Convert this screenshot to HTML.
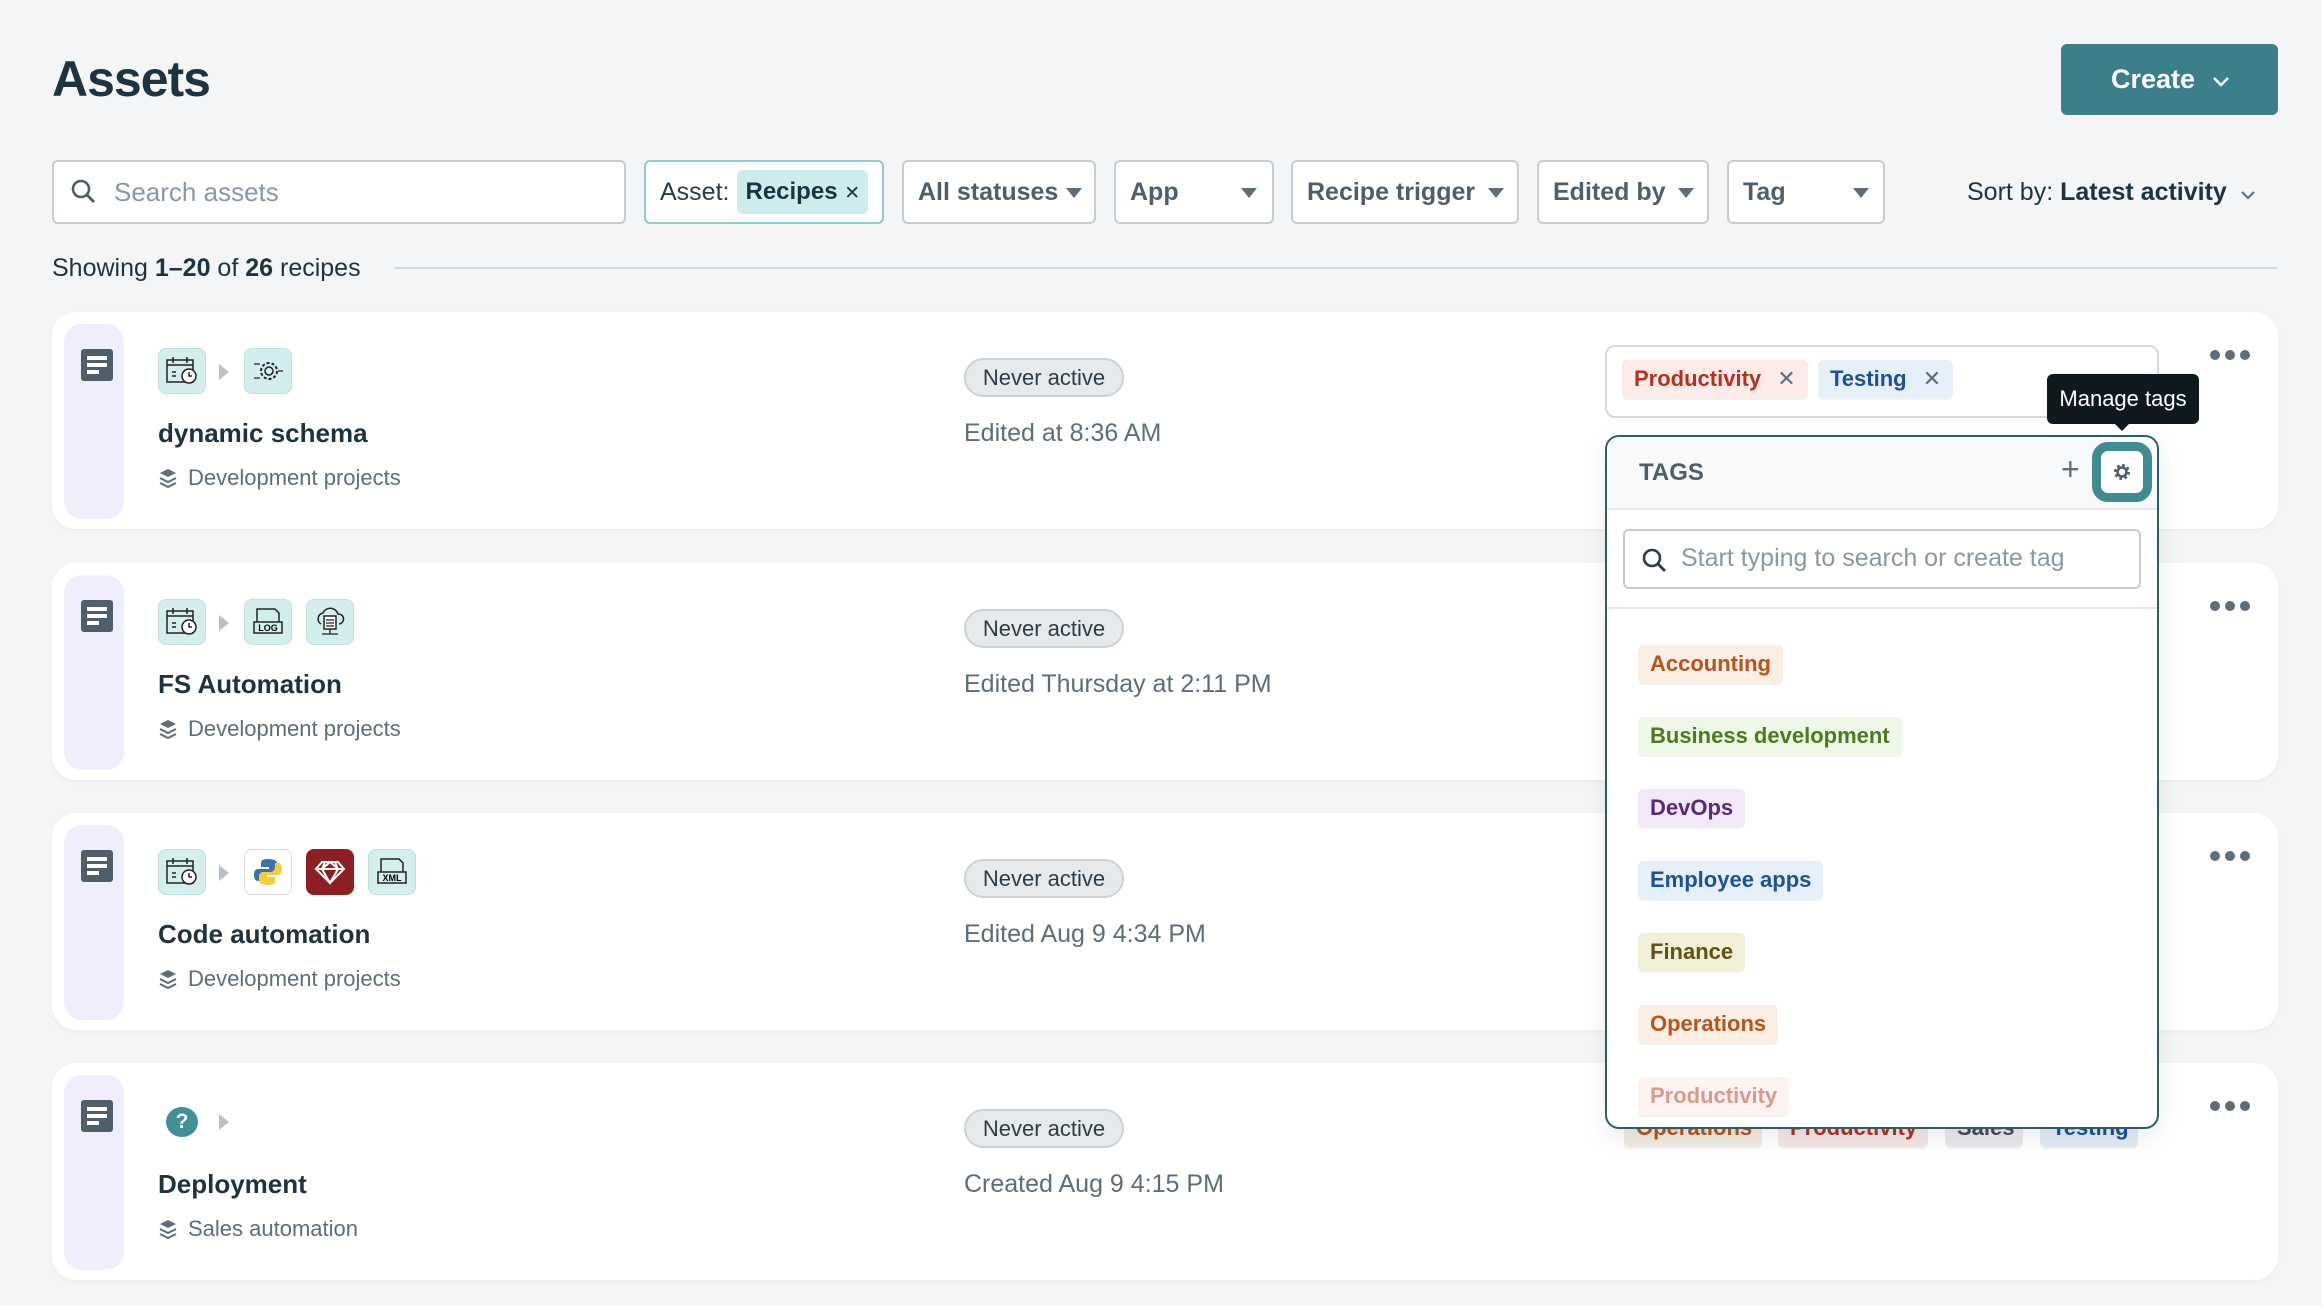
<!DOCTYPE html>
<html><head><meta charset="utf-8"><style>
*{box-sizing:border-box;margin:0;padding:0}
body{width:2322px;height:1306px;background:#f3f5f7;font-family:"Liberation Sans",sans-serif;color:#1e3340;position:relative;overflow:hidden}
.a{position:absolute}
.flt{position:absolute;top:160px;height:64px;background:#fff;border:2px solid #c6cdd3;border-radius:6px;font-size:26px;color:#5d6e7a;display:flex;align-items:center;padding-left:14px;white-space:nowrap}
.car{position:absolute;width:0;height:0;border-left:8px solid transparent;border-right:8px solid transparent;border-top:10px solid #5d6e7a}
.card{position:absolute;left:52px;width:2226px;height:217px;background:#fff;border-radius:24px;box-shadow:0 2px 4px rgba(0,0,0,.04)}
.strip{position:absolute;left:12px;top:12px;width:60px;bottom:10px;background:#efeefc;border-radius:18px}
.doc{position:absolute;left:29px;top:37px;width:32px;height:32px;background:#4e5f6b;border-radius:3px}
.doc i{position:absolute;left:6px;height:4px;background:#fff}
.ico{position:absolute;width:48px;height:46px;background:#d3eeec;border:1.5px solid #bfe0de;border-radius:8px;display:flex;align-items:center;justify-content:center}
.arr{position:absolute;width:0;height:0;border-top:8px solid transparent;border-bottom:8px solid transparent;border-left:10px solid #b8c1c8}
.ttl{position:absolute;left:106px;font-size:26px;font-weight:bold;color:#1e3340}
.fol{position:absolute;left:106px;font-size:22px;color:#5d6e7a;display:flex;align-items:center;gap:10px}
.pill{position:absolute;left:912px;width:160px;height:39px;border:2px solid #cbd1d6;background:#e7eaed;border-radius:20px;font-size:22px;color:#2b3c48;text-align:center;line-height:35px}
.ed{position:absolute;left:912px;font-size:25px;color:#5d6e7a}
.dots{position:absolute;left:2158px;top:38px;display:flex;gap:5px}
.dots i{width:10px;height:10px;border-radius:50%;background:#5d6e7a}
.tag{position:absolute;height:38px;border-radius:5px;font-size:22px;font-weight:bold;line-height:38px;padding:0 12px;box-shadow:0 2px 0 rgba(0,0,0,.05);white-space:nowrap}
</style></head><body>
<div class="a" style="left:52px;top:50px;font-size:50px;font-weight:bold;color:#1e3340;letter-spacing:-1px">Assets</div>
<div class="a" style="left:2061px;top:44px;width:217px;height:71px;background:#3b7f8b;border-radius:6px;color:#fff;font-size:27px;font-weight:bold;line-height:71px;padding-left:50px">Create <svg width="20" height="14" style="margin-left:8px" viewBox="0 0 20 14"><path d="M3 4l7 7 7-7" stroke="#fff" stroke-width="2.4" fill="none"/></svg></div>

<div class="flt" style="left:52px;width:574px;padding-left:16px"><svg width="28" height="28" viewBox="0 0 28 28"><circle cx="11" cy="11" r="8" stroke="#4e5f6b" stroke-width="2.6" fill="none"/><path d="M17 17l7 7" stroke="#4e5f6b" stroke-width="2.8"/></svg><span style="margin-left:16px;color:#8a98a3">Search assets</span></div>
<div class="flt" style="left:644px;width:240px;border-color:#8ccbd0;color:#2b3c48;padding-left:14px;font-size:25px">Asset:<span style="margin-left:8px;background:#cdeceb;border-radius:6px;padding:8px 8px;font-weight:bold;color:#1e3340;font-size:24px">Recipes <span style="font-weight:normal;font-size:19px">✕</span></span></div>
<div class="flt" style="left:902px;width:194px;color:#4e5f6b;font-weight:bold;font-size:25px">All statuses</div><div class="car" style="left:1066px;top:188px"></div>
<div class="flt" style="left:1114px;width:160px;color:#4e5f6b;font-weight:bold;font-size:25px">App</div><div class="car" style="left:1241px;top:188px"></div>
<div class="flt" style="left:1291px;width:228px;color:#4e5f6b;font-weight:bold;font-size:25px">Recipe trigger</div><div class="car" style="left:1488px;top:188px"></div>
<div class="flt" style="left:1537px;width:172px;color:#4e5f6b;font-weight:bold;font-size:25px">Edited by</div><div class="car" style="left:1678px;top:188px"></div>
<div class="flt" style="left:1727px;width:158px;color:#4e5f6b;font-weight:bold;font-size:25px">Tag</div><div class="car" style="left:1853px;top:188px"></div>
<div class="a" style="left:1967px;top:178px;font-size:25px;color:#1e3340">Sort by: <b>Latest activity</b> <svg width="16" height="10" viewBox="0 0 16 10" style="margin-left:6px"><path d="M2 2l6 6 6-6" stroke="#5d6e7a" stroke-width="2" fill="none"/></svg></div>

<div class="a" style="left:52px;top:254px;font-size:25px;color:#1e3340">Showing <b>1–20</b> of <b>26</b> recipes</div>
<div class="a" style="left:394px;top:267px;width:1884px;height:2px;background:#d3d9de"></div>

<!-- card 1 -->
<div class="card" style="top:312px">
<div class="strip"></div><div class="doc"><i style="top:7px;width:20px"></i><i style="top:14px;width:20px"></i><i style="top:21px;width:12px"></i></div>
<div class="ico" style="left:106px;top:36px"><svg width="34" height="30" viewBox="0 0 34 30"><rect x="2" y="4" width="26" height="22" fill="none" stroke="#222" stroke-width="1.5"/><path d="M2 9h26M8 1v6M22 1v6M7 16h4M7 20h4" stroke="#222" stroke-width="1.5"/><circle cx="24" cy="20" r="7" fill="#fff" stroke="#222" stroke-width="1.5"/><path d="M24 16v4h3" stroke="#222" stroke-width="1.5" fill="none"/></svg></div>
<div class="arr" style="left:167px;top:52px"></div>
<div class="ico" style="left:192px;top:36px"><svg width="32" height="30" viewBox="0 0 32 30"><circle cx="17" cy="15" r="8" fill="none" stroke="#222" stroke-width="2" stroke-dasharray="3 2"/><circle cx="17" cy="15" r="4" fill="none" stroke="#222" stroke-width="1.5"/><path d="M2 8h6M2 22h6M26 15h5" stroke="#222" stroke-width="1.3"/></svg></div>
<div class="ttl" style="top:106px">dynamic schema</div>
<div class="fol" style="top:153px"><svg width="20" height="22" viewBox="0 0 20 22"><path d="M10 2l8 4-8 4-8-4z" fill="#5d6e7a"/><path d="M2 11l8 4 8-4M2 16l8 4 8-4" stroke="#5d6e7a" stroke-width="2" fill="none"/></svg>Development projects</div>
<div class="pill" style="top:46px">Never active</div>
<div class="ed" style="top:107px">Edited at 8:36 AM</div>
<div class="dots"><i></i><i></i><i></i></div>
</div>

<!-- card 2 -->
<div class="card" style="top:563px">
<div class="strip"></div><div class="doc"><i style="top:7px;width:20px"></i><i style="top:14px;width:20px"></i><i style="top:21px;width:12px"></i></div>
<div class="ico" style="left:106px;top:36px"><svg width="34" height="30" viewBox="0 0 34 30"><rect x="2" y="4" width="26" height="22" fill="none" stroke="#222" stroke-width="1.5"/><path d="M2 9h26M8 1v6M22 1v6M7 16h4M7 20h4" stroke="#222" stroke-width="1.5"/><circle cx="24" cy="20" r="7" fill="#fff" stroke="#222" stroke-width="1.5"/><path d="M24 16v4h3" stroke="#222" stroke-width="1.5" fill="none"/></svg></div>
<div class="arr" style="left:167px;top:52px"></div>
<div class="ico" style="left:192px;top:36px"><svg width="34" height="32" viewBox="0 0 34 32"><path d="M6 16V3h18l4 4v9" fill="none" stroke="#222" stroke-width="1.5"/><rect x="3" y="16" width="28" height="11" fill="none" stroke="#222" stroke-width="1.5"/><text x="17" y="25" font-size="9" text-anchor="middle" font-family="Liberation Sans" font-weight="bold">LOG</text></svg></div>
<div class="ico" style="left:254px;top:36px"><svg width="34" height="32" viewBox="0 0 34 32"><path d="M8 18a6 6 0 0 1 2-11 8 8 0 0 1 15 1 5 5 0 0 1 1 10" fill="none" stroke="#222" stroke-width="1.5"/><rect x="11" y="10" width="12" height="13" fill="#fff" stroke="#222" stroke-width="1.5"/><path d="M13 14h8M13 17h8M13 20h8M17 23v5M9 28h16" stroke="#222" stroke-width="1.3"/></svg></div>
<div class="ttl" style="top:106px">FS Automation</div>
<div class="fol" style="top:153px"><svg width="20" height="22" viewBox="0 0 20 22"><path d="M10 2l8 4-8 4-8-4z" fill="#5d6e7a"/><path d="M2 11l8 4 8-4M2 16l8 4 8-4" stroke="#5d6e7a" stroke-width="2" fill="none"/></svg>Development projects</div>
<div class="pill" style="top:46px">Never active</div>
<div class="ed" style="top:107px">Edited Thursday at 2:11 PM</div>
<div class="dots"><i></i><i></i><i></i></div>
</div>

<!-- card 3 -->
<div class="card" style="top:813px">
<div class="strip"></div><div class="doc"><i style="top:7px;width:20px"></i><i style="top:14px;width:20px"></i><i style="top:21px;width:12px"></i></div>
<div class="ico" style="left:106px;top:36px"><svg width="34" height="30" viewBox="0 0 34 30"><rect x="2" y="4" width="26" height="22" fill="none" stroke="#222" stroke-width="1.5"/><path d="M2 9h26M8 1v6M22 1v6M7 16h4M7 20h4" stroke="#222" stroke-width="1.5"/><circle cx="24" cy="20" r="7" fill="#fff" stroke="#222" stroke-width="1.5"/><path d="M24 16v4h3" stroke="#222" stroke-width="1.5" fill="none"/></svg></div>
<div class="arr" style="left:167px;top:52px"></div>
<div class="ico" style="left:192px;top:36px;background:#fff;border-color:#d3d9de"><svg width="32" height="32" viewBox="0 0 32 32"><path d="M16 3c-6 0-7 2-7 4v4h8v2H6c-3 0-4 3-4 6s1 6 4 6h3v-4c0-3 2-5 5-5h7c2 0 4-2 4-4V7c0-2-3-4-9-4z" fill="#3b73a8"/><path d="M16 29c6 0 7-2 7-4v-4h-8v-2h11c3 0 4-3 4-6s-1-6-4-6h-3v4c0 3-2 5-5 5h-7c-2 0-4 2-4 4v5c0 2 3 4 9 4z" fill="#f5cd3c"/></svg></div>
<div class="ico" style="left:254px;top:36px;background:#8d1f22;border-color:#8d1f22"><svg width="32" height="26" viewBox="0 0 32 26"><path d="M8 3h16l6 7-14 14L2 10z M2 10h28 M11 3l-3 7 8 14 8-14-3-7 M8 10l8-7 8 7" fill="none" stroke="#fff" stroke-width="2"/></svg></div>
<div class="ico" style="left:316px;top:36px"><svg width="34" height="32" viewBox="0 0 34 32"><path d="M6 16V3h18l4 4v9" fill="none" stroke="#222" stroke-width="1.5"/><rect x="3" y="16" width="28" height="11" fill="none" stroke="#222" stroke-width="1.5"/><text x="17" y="25" font-size="9" text-anchor="middle" font-family="Liberation Sans" font-weight="bold">XML</text></svg></div>
<div class="ttl" style="top:106px">Code automation</div>
<div class="fol" style="top:153px"><svg width="20" height="22" viewBox="0 0 20 22"><path d="M10 2l8 4-8 4-8-4z" fill="#5d6e7a"/><path d="M2 11l8 4 8-4M2 16l8 4 8-4" stroke="#5d6e7a" stroke-width="2" fill="none"/></svg>Development projects</div>
<div class="pill" style="top:46px">Never active</div>
<div class="ed" style="top:107px">Edited Aug 9 4:34 PM</div>
<div class="dots"><i></i><i></i><i></i></div>
</div>

<!-- card 4 -->
<div class="card" style="top:1063px">
<div class="strip"></div><div class="doc"><i style="top:7px;width:20px"></i><i style="top:14px;width:20px"></i><i style="top:21px;width:12px"></i></div>
<div class="a" style="left:114px;top:44px;width:32px;height:30px;border-radius:50%;background:#3f9197;color:#fff;font-size:21px;font-weight:bold;text-align:center;line-height:30px">?</div>
<div class="arr" style="left:167px;top:51px"></div>
<div class="ttl" style="top:106px">Deployment</div>
<div class="fol" style="top:153px"><svg width="20" height="22" viewBox="0 0 20 22"><path d="M10 2l8 4-8 4-8-4z" fill="#5d6e7a"/><path d="M2 11l8 4 8-4M2 16l8 4 8-4" stroke="#5d6e7a" stroke-width="2" fill="none"/></svg>Sales automation</div>
<div class="pill" style="top:46px">Never active</div>
<div class="ed" style="top:107px">Created Aug 9 4:15 PM</div>
<div class="dots"><i></i><i></i><i></i></div>
<div class="tag" style="left:1572px;top:46px;width:138px;background:#f0ebe0;color:#b8541b">Operations</div>
<div class="tag" style="left:1726px;top:46px;width:150px;background:#f5e6e6;color:#b5301f">Productivity</div>
<div class="tag" style="left:1893px;top:46px;width:78px;background:#e8e8ee;color:#4a4a5a">Sales</div>
<div class="tag" style="left:1988px;top:46px;width:98px;background:#e0ebf5;color:#1f4f9c">Testing</div>
</div>

<!-- tag input -->
<div class="a" style="left:1605px;top:345px;width:554px;height:73px;background:#fff;border:2px solid #d3d9de;border-radius:10px"></div>
<div class="tag" style="left:1622px;top:360px;background:#fcebe8;color:#b5301f">Productivity <span style="font-weight:normal;color:#5d6e7a;margin-left:10px">✕</span></div>
<div class="tag" style="left:1818px;top:360px;background:#e6f0fa;color:#1f4f9c">Testing <span style="font-weight:normal;color:#5d6e7a;margin-left:10px">✕</span></div>

<!-- dropdown -->
<div class="a" style="left:1605px;top:435px;width:554px;height:694px;background:#fff;border:2px solid #2c5d68;border-radius:14px;overflow:hidden;box-shadow:0 8px 24px rgba(0,0,0,.08)">
<div class="a" style="left:0;top:0;width:550px;height:73px;background:#f8f9fb;border-bottom:2px solid #e3e7ea"></div>
<div class="a" style="left:32px;top:22px;font-size:24px;font-weight:bold;color:#4e5f6b">TAGS</div>
<div class="a" style="left:454px;top:14px;font-size:32px;color:#5d6e7a">+</div>
<div class="a" style="left:16px;top:92px;width:518px;height:60px;border:2px solid #c6cdd3;border-radius:6px"></div>
<svg class="a" style="left:34px;top:110px" width="28" height="28" viewBox="0 0 28 28"><circle cx="11" cy="11" r="8" stroke="#2b3c48" stroke-width="2.6" fill="none"/><path d="M17 17l7 7" stroke="#2b3c48" stroke-width="2.8"/></svg>
<div class="a" style="left:74px;top:107px;font-size:25px;color:#8a98a3">Start typing to search or create tag</div>
<div class="a" style="left:0;top:170px;width:550px;height:2px;background:#e3e7ea"></div>
<div class="tag" style="left:31px;top:208px;background:#fbefe4;color:#b8541b">Accounting</div>
<div class="tag" style="left:31px;top:280px;background:#eef8e6;color:#4b7a20">Business development</div>
<div class="tag" style="left:31px;top:352px;background:#f2e8f7;color:#5a2a7a">DevOps</div>
<div class="tag" style="left:31px;top:424px;background:#e6f0fa;color:#1f4f9c">Employee apps</div>
<div class="tag" style="left:31px;top:496px;background:#f1efd6;color:#5f5213">Finance</div>
<div class="tag" style="left:31px;top:568px;background:#fbefe4;color:#b8541b">Operations</div>
<div class="tag" style="left:31px;top:640px;background:#fdf3f1;color:#d89a90">Productivity</div>
</div>
<!-- gear highlight -->
<div class="a" style="left:2092px;top:442px;width:60px;height:60px;border:9px solid #3e8c8f;border-radius:16px;background:#fff"></div>
<svg class="a" style="left:2112px;top:462px" width="20" height="20" viewBox="0 0 20 20"><circle cx="10" cy="10" r="6" fill="none" stroke="#4e5f6b" stroke-width="4" stroke-dasharray="2.4 2.3"/><circle cx="10" cy="10" r="4.5" fill="none" stroke="#4e5f6b" stroke-width="2.5"/></svg>
<!-- tooltip -->
<div class="a" style="left:2047px;top:374px;width:152px;height:50px;background:#0f1a20;border-radius:6px;color:#fff;font-size:22px;text-align:center;line-height:50px">Manage tags</div>
<div class="a" style="left:2114px;top:423px;width:0;height:0;border-left:8px solid transparent;border-right:8px solid transparent;border-top:8px solid #0f1a20"></div>
</body></html>
